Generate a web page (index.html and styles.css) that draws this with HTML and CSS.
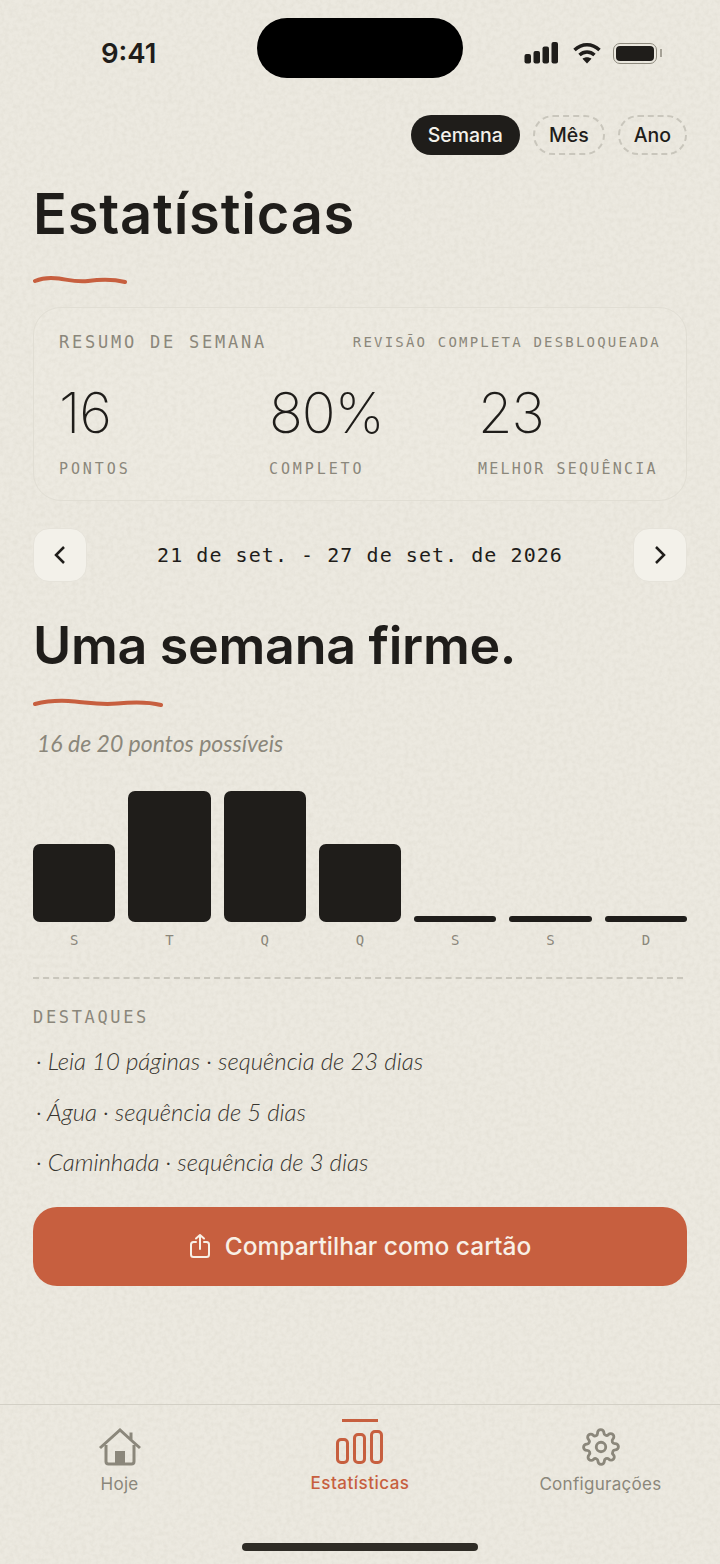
FILE: index.html
```html
<!DOCTYPE html>
<html lang="pt-BR">
<head>
    <meta charset="UTF-8">
    <meta name="viewport" content="width=device-width, initial-scale=1.0">
    <title>Estatísticas</title>
    <link rel="stylesheet" href="styles.css">
</head>
<body>
    <svg class="paper" width="720" height="1564" aria-hidden="true">
        <filter id="grain">
            <feTurbulence type="fractalNoise" baseFrequency="0.22" numOctaves="4" seed="7"/>
            <feColorMatrix type="matrix" values="0 0 0 0 0.45  0 0 0 0 0.42  0 0 0 0 0.34  0 0 0 0.22 -0.075"/>
        </filter>
        <rect width="720" height="1564" filter="url(#grain)"/>
    </svg>

    <div class="screen">
        <div class="status-bar">
            <div class="time">9:41</div>
            <div class="island"></div>
            <div class="status-icons">
                <svg class="signal" width="34" height="22" viewBox="0 0 34 22">
                    <rect x="0.500" y="12" width="6.500" height="9.500" rx="2"/>
                    <rect x="9.500" y="9" width="6.500" height="12.500" rx="2"/>
                    <rect x="18.500" y="4.500" width="6.500" height="17" rx="2"/>
                    <rect x="27.500" y="0" width="6.500" height="21.500" rx="2"/>
                </svg>
                <svg class="wifi-icon" width="28" height="22" viewBox="0 0 28 22">
                    <path d="M1.500 8C9 1 19 1 26.500 8" class="wifi"/>
                    <path d="M6.500 13C11 9 17 9 21.500 13" class="wifi"/>
                    <path d="M14 21.500L9.500 16.800C12 14.800 16 14.800 18.500 16.800Z"/>
                </svg>
                <div class="battery"><div class="battery-fill"></div></div>
            </div>
        </div>

        <div class="range">
            <div class="chip active">Semana</div>
            <div class="chip">Mês</div>
            <div class="chip">Ano</div>
        </div>

        <h1>Estatísticas</h1>
        <svg class="squiggle" width="94" height="10" viewBox="0 0 94 10">
            <path d="M2 6C9 3 16 2 26 3.500C36 5 44 7.500 55 6C66 4.500 78 3.500 92 7"/>
        </svg>

        <section class="summary">
            <div class="summary-head">
                <div class="summary-title">RESUMO DE SEMANA</div>
                <div class="summary-note">REVISÃO COMPLETA DESBLOQUEADA</div>
            </div>
            <div class="stats">
                <div>
                    <div class="stat-value">16</div>
                    <div class="stat-label">PONTOS</div>
                </div>
                <div>
                    <div class="stat-value">80%</div>
                    <div class="stat-label">COMPLETO</div>
                </div>
                <div>
                    <div class="stat-value">23</div>
                    <div class="stat-label tight">MELHOR SEQUÊNCIA</div>
                </div>
            </div>
        </section>

        <div class="week-nav">
            <button class="nav-btn" aria-label="Anterior">
                <svg width="14" height="20" viewBox="0 0 14 20"><path d="M11 2L3 10L11 18"/></svg>
            </button>
            <div class="week-date">21 de set. - 27 de set. de 2026</div>
            <button class="nav-btn" aria-label="Próxima">
                <svg width="14" height="20" viewBox="0 0 14 20"><path d="M3 2L11 10L3 18"/></svg>
            </button>
        </div>

        <h2>Uma semana firme.</h2>
        <svg class="squiggle" width="130" height="10" viewBox="0 0 130 10">
            <path d="M2 6C14 3 26 2 42 3.500C58 5 68 7 84 5.500C100 4 114 3.500 128 7"/>
        </svg>
        <p class="points-note">16 de 20 pontos possíveis</p>

        <div class="chart">
            <div class="col"><div class="bar mid"></div><span>S</span></div>
            <div class="col"><div class="bar high"></div><span>T</span></div>
            <div class="col"><div class="bar high"></div><span>Q</span></div>
            <div class="col"><div class="bar mid"></div><span>Q</span></div>
            <div class="col"><div class="bar none"></div><span>S</span></div>
            <div class="col"><div class="bar none"></div><span>S</span></div>
            <div class="col"><div class="bar none"></div><span>D</span></div>
        </div>

        <div class="divider"></div>

        <div class="highlights-title">DESTAQUES</div>
        <ul class="highlights">
            <li>· Leia 10 páginas · sequência de 23 dias</li>
            <li>· Água · sequência de 5 dias</li>
            <li>· Caminhada · sequência de 3 dias</li>
        </ul>

        <button class="share">
            <svg width="22" height="26" viewBox="0 0 22 26">
                <path d="M7 9H4.500C3 9 2 10 2 11.500V21.500C2 23 3 24 4.500 24H17.500C19 24 20 23 20 21.500V11.500C20 10 19 9 17.500 9H15"/>
                <path d="M11 16V2M7 5.500L11 2L15 5.500"/>
            </svg>
            Compartilhar como cartão
        </button>

        <nav class="tabbar">
            <a class="tab" href="#">
                <svg width="44" height="38" viewBox="0 0 44 38">
                    <path d="M2 20L22 2L33 12M33 12V4.500M33 12L42 20" class="home-line"/>
                    <path d="M8 17V33.500C8 35 9 36 10.500 36H33.500C35 36 36 35 36 33.500V17" class="home-line"/>
                    <rect x="17" y="23" width="10" height="13" class="home-door"/>
                </svg>
                Hoje
            </a>
            <a class="tab active" href="#">
                <span class="tab-mark"></span>
                <svg width="48" height="34" viewBox="0 0 48 34">
                    <rect x="1.500" y="9.500" width="10" height="23" rx="3.500"/>
                    <rect x="18.500" y="4.500" width="10" height="28" rx="3.500"/>
                    <rect x="35.500" y="1.500" width="10" height="31" rx="3.500"/>
                </svg>
                Estatísticas
            </a>
            <a class="tab" href="#">
                <svg width="38" height="38" viewBox="0 0 24 24">
                    <circle cx="12" cy="12" r="3"/>
                    <path d="M19.400 15a1.650 1.650 0 0 0 .33 1.820l.06.06a2 2 0 1 1-2.830 2.830l-.06-.06a1.650 1.650 0 0 0-2.800 1.170V21a2 2 0 1 1-4 0v-.09a1.650 1.650 0 0 0-2.800-1.120l-.06.06a2 2 0 1 1-2.830-2.830l.06-.06a1.650 1.650 0 0 0-1.170-2.800H3a2 2 0 1 1 0-4h.09a1.650 1.650 0 0 0 1.120-2.800l-.06-.06a2 2 0 1 1 2.830-2.830l.06.06a1.650 1.650 0 0 0 2.800-1.170V3a2 2 0 1 1 4 0v.09a1.650 1.650 0 0 0 2.800 1.120l.06-.06a2 2 0 1 1 2.830 2.830l-.06.06a1.650 1.650 0 0 0 1.170 2.800H21a2 2 0 1 1 0 4h-.09a1.650 1.650 0 0 0-1.510 1.160z"/>
                </svg>
                Configurações
            </a>
        </nav>
        <div class="home-indicator"></div>
    </div>
</body>
</html>
```

FILE: styles.css
```css
* {
    box-sizing: border-box;
}
html, body {
    margin: 0;
    padding: 0;
}
body {
    position: relative;
    width: 720px;
    height: 1564px;
    overflow: hidden;
    background: #ece9e0;
    color: #1f1d1a;
    font-family: Inter, "Noto Sans", sans-serif;
}
button {
    border: 0;
    font-family: inherit;
}
h1, h2, p, ul {
    margin: 0;
    padding: 0;
}
.paper {
    position: absolute;
    top: 0;
    left: 0;
}
.screen {
    position: relative;
    height: 1564px;
    padding: 18px 33px 0;
    display: flex;
    flex-direction: column;
}

/* status bar */
.status-bar {
    height: 60px;
    display: grid;
    grid-template-columns: 224px 206px 1fr;
    align-items: center;
}
.time {
    padding: 10px 0 0 68px;
    font-size: 27.500px;
    font-weight: 600;
}
.island {
    height: 60px;
    background: #000;
    border-radius: 30px;
}
.status-icons {
    padding: 10px 0 0 61px;
    display: flex;
    align-items: center;
}
.status-icons svg {
    fill: #1f1d1a;
}
.wifi-icon {
    margin: 0 12px 0 15px;
}
.wifi {
    fill: none;
    stroke: #1f1d1a;
    stroke-width: 3.500;
}
.battery {
    position: relative;
    width: 44px;
    height: 21px;
    padding: 2px;
    border: 1.500px solid #8d897d;
    border-radius: 7px;
}
.battery::after {
    content: '';
    position: absolute;
    top: 5px;
    right: -6px;
    width: 2px;
    height: 8px;
    background: #a5a196;
}
.battery-fill {
    height: 100%;
    background: #1f1d1a;
    border-radius: 4px;
}

/* range */
.range {
    margin-top: 37px;
    display: flex;
    justify-content: flex-end;
    gap: 13px;
}
.chip {
    height: 40px;
    padding: 0 14px;
    display: flex;
    align-items: center;
    border: 2px dashed #c9c6bc;
    border-radius: 20px;
    font-size: 19.500px;
    font-weight: 500;
}
.chip.active {
    background: #1f1d1a;
    border: 0;
    color: #f3f1ea;
    padding: 0 17px;
}

h1 {
    margin-top: 24px;
    font-size: 56px;
    line-height: 70px;
    font-weight: 600;
    letter-spacing: 0.800px;
}
.squiggle {
    display: block;
    margin-top: 26px;
}
.squiggle path {
    fill: none;
    stroke: #c75f3f;
    stroke-width: 4;
    stroke-linecap: round;
}

/* summary */
.summary {
    margin-top: 22px;
    height: 194px;
    padding: 24px 25px 0;
    border: 1px solid #e1ded4;
    border-radius: 28px;
    background: rgba(243,241,234,.1);
    font-family: "DejaVu Sans Mono", monospace;
    color: #8b877b;
}
.summary-head {
    display: flex;
    justify-content: space-between;
    align-items: center;
}
.summary-title {
    font-size: 17px;
    letter-spacing: 2.760px;
}
.summary-note {
    font-size: 14px;
    letter-spacing: 2.200px;
}
.stats {
    margin-top: 29px;
    display: grid;
    grid-template-columns: 210px 209px 1fr;
}
.stat-value {
    font-family: Inter, sans-serif;
    font-size: 56px;
    line-height: 64px;
    font-weight: 200;
    letter-spacing: -1px;
    color: #1f1d1a;
}
.stat-label {
    margin-top: 15px;
    font-size: 15px;
    letter-spacing: 2.900px;
    white-space: nowrap;
}
.stat-label.tight {
    letter-spacing: 2.200px;
}

/* week nav */
.week-nav {
    margin-top: 27px;
    display: flex;
    align-items: center;
    justify-content: space-between;
}
.nav-btn {
    width: 54px;
    height: 54px;
    display: flex;
    align-items: center;
    justify-content: center;
    background: #f3f1ea;
    border: 1px solid #e6e3da;
    border-radius: 16px;
}
.nav-btn svg path {
    fill: none;
    stroke: #1f1d1a;
    stroke-width: 2.500;
}
.week-date {
    font-family: "DejaVu Sans Mono", monospace;
    font-size: 20px;
    letter-spacing: 1.050px;
}

h2 {
    margin-top: 31px;
    font-size: 52px;
    line-height: 66px;
    font-weight: 600;
    letter-spacing: -0.300px;
}
h2 + .squiggle {
    margin-top: 19px;
}
.points-note {
    margin-top: 20px;
    margin-left: 4px;
    font-family: Lato, sans-serif;
    font-style: italic;
    font-size: 23px;
    line-height: 30px;
    color: #8b877b;
}

/* chart */
.chart {
    margin-top: 33px;
    display: grid;
    grid-template-columns: repeat(7, 1fr);
    gap: 13px;
    align-items: end;
}
.col {
    display: flex;
    flex-direction: column;
    align-items: center;
}
.col span {
    margin-top: 9px;
    font-family: "DejaVu Sans Mono", monospace;
    font-size: 14px;
    line-height: 18px;
    color: #8b877b;
}
.bar {
    width: 100%;
    background: #1f1d1a;
    border-radius: 7px;
}
.bar.high {
    height: 131px;
}
.bar.mid {
    height: 78px;
}
.bar.none {
    height: 6px;
    border-radius: 3px;
}
.divider {
    margin: 28px 4px 0 0;
    border-top: 2px dashed #c9c6bc;
}
.highlights-title {
    margin-top: 28px;
    font-family: "DejaVu Sans Mono", monospace;
    font-size: 17px;
    letter-spacing: 2.650px;
    color: #8b877b;
}
.highlights {
    margin-top: 19px;
    margin-left: 3px;
    list-style: none;
    font-family: Lato, sans-serif;
    font-style: italic;
    font-weight: 300;
    font-size: 24px;
    color: #38352f;
}
.highlights li {
    height: 50.500px;
    line-height: 30px;
}

/* share */
.share {
    margin-top: 9px;
    height: 79px;
    display: flex;
    align-items: center;
    justify-content: center;
    gap: 14px;
    background: #c75f3f;
    border-radius: 24px;
    color: #f8f0e6;
    font-size: 24.500px;
    font-weight: 500;
}
.share svg path {
    fill: none;
    stroke: #f8f0e6;
    stroke-width: 2;
    stroke-linecap: round;
    stroke-linejoin: round;
}

/* tabbar */
.tabbar {
    position: absolute;
    top: 1404px;
    left: 0;
    width: 720px;
    height: 100px;
    display: grid;
    grid-template-columns: 239px 242px 239px;
    border-top: 1px solid #d3d0c6;
}
.tab {
    position: relative;
    padding-top: 23px;
    display: flex;
    flex-direction: column;
    align-items: center;
    color: #8b877b;
    text-decoration: none;
    font-size: 17px;
    font-weight: 400;
    letter-spacing: 0.300px;
    gap: 8px;
}
.tab svg {
    fill: none;
    stroke: #8b877b;
    stroke-width: 2;
}
.tab:first-child svg {
    stroke-width: 3;
}
.tab:last-child svg {
    stroke-width: 1.800;
}
.home-door {
    fill: #8b877b;
    stroke: none;
}
.tab.active {
    color: #c75f3f;
    padding-top: 25px;
    gap: 9px;
    font-weight: 500;
    letter-spacing: 0.500px;
}
.tab.active svg {
    stroke: #c75f3f;
    stroke-width: 3;
}
.tab-mark {
    position: absolute;
    top: 14px;
    left: 103px;
    width: 36px;
    height: 3px;
    background: #c75f3f;
}
.home-indicator {
    position: absolute;
    top: 1543px;
    left: 242px;
    width: 236px;
    height: 8px;
    background: #2f2c26;
    border-radius: 4px;
}
```
